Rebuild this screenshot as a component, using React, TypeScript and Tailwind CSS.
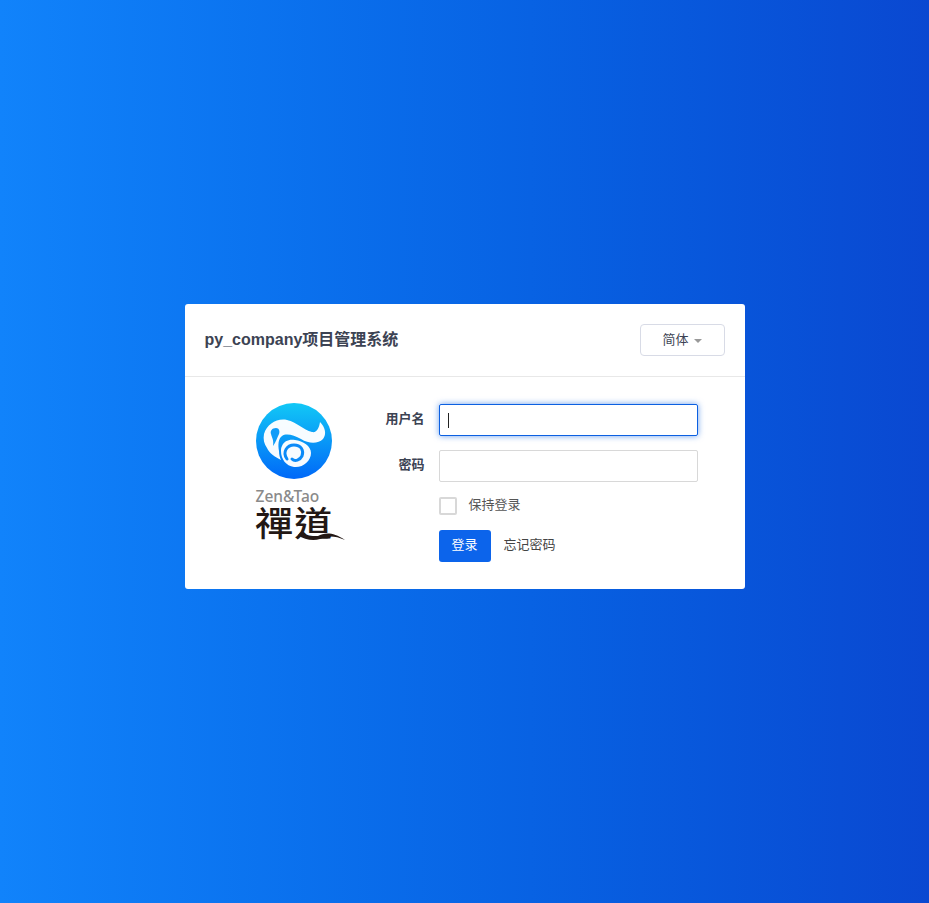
const Logo = () => (
  <div className="-mt-px flex w-[90px] flex-col items-start">
    <svg width="76" height="76" viewBox="0 0 76 76" className="ml-px">
      <defs>
        <linearGradient id="ball" x1="0" y1="0" x2="0" y2="1">
          <stop offset="0" stopColor="#12c8f6" />
          <stop offset="1" stopColor="#0068f8" />
        </linearGradient>
      </defs>
      <circle cx="38" cy="38" r="38" fill="url(#ball)" />
      <path
        d="M8 31C11 21 21 15 31 17C41 19 47 27 56 29C61 30 63 25 64 19C69 24 71 31 67 36C62 41 53 41 45 36C38 32 30 30 26 33C22 36 22 42 23 48C23 52 24 55 25 57C19 54 13 50 11 45C8 41 7 36 8 31Z"
        fill="#fff"
        fillOpacity="0.97"
      />
      <path
        d="M20 25C16 25 14 28 15 31C16 35 18 37 17 43C20 39 21 35 23 31C24 28 23 25 20 25Z"
        fill="#0f9cf8"
      />
      <path
        d="M26 43C28 38 33 36 39 37C47 38 55 43 55 50C55 58 47 65 38 64C30 63 25 56 25 48C25 46 25 45 26 43Z"
        fill="#fff"
        fillOpacity="0.97"
      />
      <path
        d="M31 56C26 49 31 42 38 42C45 42 48 47 46 53C44 57 39 59 36 56"
        fill="none"
        stroke="#0b8af8"
        strokeWidth="3"
        strokeLinecap="round"
      />
    </svg>
    <span className="mt-[9px] ml-px text-[15.5px] leading-[16px] font-medium text-[#8a8a8a] [font-family:'Noto_Sans',sans-serif]">
      Zen&amp;Tao
    </span>
    <div className="relative h-[37px] w-[90px]">
      <span className="block origin-left scale-x-[1.12] text-[34px] leading-[36px] font-medium tracking-[1px] text-[#231815] [font-family:'Noto_Sans_CJK_TC',sans-serif]">
        禪道
      </span>
      <svg width="50" height="14" viewBox="0 0 50 14" className="absolute right-[-1px] bottom-0">
        <path
          d="M2 8C5 4 9 5 10 8C13 11 18 11 22 9C28 6 36 4 49 13C38 8 30 9 24 12C18 14 8 13 2 8Z"
          fill="#231815"
        />
      </svg>
    </div>
  </div>
)

const App = () => {
  return (
    <div className="flex min-h-screen items-start justify-center bg-gradient-to-r from-[#1183fb] to-[#0a48d1] pt-[304px] [font-family:'Liberation_Sans','Noto_Sans_CJK_SC',sans-serif]">
      <div className="h-[285px] w-[560px] rounded-[3px] bg-white text-[13px] text-[#3c4353]">
        <div className="flex h-[73px] items-center justify-between border-b border-[#e8e8e8] px-5">
          <h1 className="text-base font-bold">py_company项目管理系统</h1>
          <button className="flex h-8 w-[85px] items-center justify-center gap-[5px] rounded-[4px] border border-[#d8dbe6] bg-white">
            简体
            <span className="mt-px h-0 w-0 border-x-4 border-t-4 border-x-transparent border-t-[#999]" />
          </button>
        </div>
        <div className="flex pt-[27px]">
          <div className="ml-[70px] w-[116px]">
            <Logo />
          </div>
          <form className="flex flex-col">
            <div className="flex items-center">
              <label className="w-[54px] pb-0.5 text-right font-bold">用户名</label>
              <div className="ml-3.5 flex h-8 w-[259px] items-center rounded-[2px] border border-[#0c60e1] px-2 shadow-[0_0_6px_rgba(12,96,225,0.6)]">
                <span className="h-[15px] w-px bg-[#222]" />
              </div>
            </div>
            <div className="mt-3.5 flex items-center">
              <label className="w-[54px] pb-0.5 text-right font-bold">密码</label>
              <div className="ml-3.5 h-8 w-[259px] rounded-[2px] border border-[#d8d8d8]" />
            </div>
            <div className="mt-[15px] ml-[68px] flex h-[18px] items-center">
              <span className="h-[18px] w-[18px] rounded-[2px] border-2 border-[#d8d8d8]" />
              <span className="ml-3 pb-0.5 text-[#555]">保持登录</span>
            </div>
            <div className="mt-[15px] ml-[68px] flex items-center">
              <button type="button" className="h-8 w-[52px] rounded-[3px] bg-[#0c64eb] pb-0.5 text-white">
                登录
              </button>
              <a className="ml-[13px] pb-0.5 text-[#444]">忘记密码</a>
            </div>
          </form>
        </div>
      </div>
    </div>
  )
}

export default App
